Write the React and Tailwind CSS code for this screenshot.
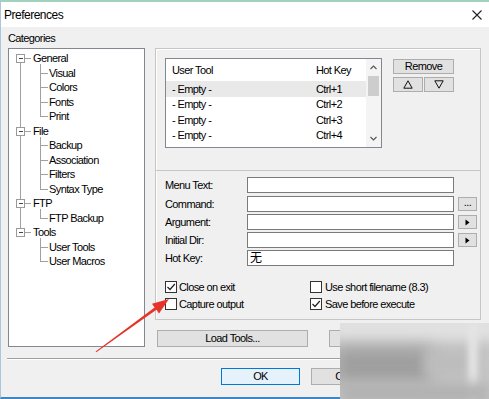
import React from "react";

const tree = [
  { t: "General", l: 0 },
  { t: "Visual", l: 1 },
  { t: "Colors", l: 1 },
  { t: "Fonts", l: 1 },
  { t: "Print", l: 1 },
  { t: "File", l: 0 },
  { t: "Backup", l: 1 },
  { t: "Association", l: 1 },
  { t: "Filters", l: 1 },
  { t: "Syntax Type", l: 1 },
  { t: "FTP", l: 0 },
  { t: "FTP Backup", l: 1 },
  { t: "Tools", l: 0 },
  { t: "User Tools", l: 1 },
  { t: "User Macros", l: 1 },
];

const yc = (i) => Math.round(9.25 + 14.5 * i) + 0.5;

function TreeLines() {
  const roots = [0, 5, 10, 12];
  const groups = [
    [0, 4],
    [5, 9],
    [10, 11],
    [12, 14],
  ];
  return (
    <svg className="absolute left-0 top-0" width="135" height="297" shapeRendering="crispEdges">
      <line x1="11.5" y1={yc(0)} x2="11.5" y2={yc(12)} stroke="#a0a0a0" />
      {groups.map(([r, last]) => (
        <g key={r}>
          <line x1="31.5" y1={yc(r) + 5} x2="31.5" y2={yc(last)} stroke="#a0a0a0" />
          {Array.from({ length: last - r }, (_, k) => r + 1 + k).map((c) => (
            <line key={c} x1="31.5" y1={yc(c)} x2="39" y2={yc(c)} stroke="#a0a0a0" />
          ))}
        </g>
      ))}
      {roots.map((r) => (
        <g key={r}>
          <line x1="16" y1={yc(r)} x2="22" y2={yc(r)} stroke="#a0a0a0" />
          <rect x="7.5" y={yc(r) - 4} width="8" height="8" fill="#fff" stroke="#9a9a9a" />
          <line x1="9.5" y1={yc(r)} x2="14" y2={yc(r)} stroke="#444" />
        </g>
      ))}
    </svg>
  );
}

function Check({ checked }) {
  return (
    <div className="w-[12px] h-[12px] border border-[#333] bg-white flex items-center justify-center">
      {checked && (
        <svg width="10" height="10" viewBox="0 0 10 10">
          <polyline points="1.5,5 4,7.5 8.8,2" fill="none" stroke="#222" strokeWidth="1.2" />
        </svg>
      )}
    </div>
  );
}

function Arrow() {
  return (
    <svg className="absolute left-0 top-0 pointer-events-none" width="489" height="399">
      <polygon
        points="96.2,352.3 156.4,309.8 159,313.4 169,299 152,303.8 154.6,307.4 95.6,351.5"
        fill="#e5352b"
      />
    </svg>
  );
}

export default function App() {
  const fields = [
    { label: "Menu Text:", v: "", b: null },
    { label: "Command:", v: "", b: "dots" },
    { label: "Argument:", v: "", b: "tri" },
    { label: "Initial Dir:", v: "", b: "tri" },
    { label: "Hot Key:", v: "无", b: null },
  ];
  return (
    <div className="relative w-[489px] h-[399px] overflow-hidden font-['Liberation_Sans','Noto_Sans_CJK_SC',sans-serif] text-[11px] tracking-[-0.6px] text-black">
      <div className="w-full h-full flex flex-col bg-[#f0f0f0] border-l border-l-[#a9c6dc] border-b-2 border-b-[#3f86c4]">
        {/* title bar */}
        <div className="h-[27px] shrink-0 border-t-2 border-t-[#a3d1bd] bg-white flex items-center pl-[3px] pr-[7px]">
          <span className="text-[12px] tracking-[-0.5px]">Preferences</span>
          <svg className="ml-auto" width="10" height="10" viewBox="0 0 10 10">
            <path d="M0.5 0.5 L9.5 9.5 M9.5 0.5 L0.5 9.5" stroke="#222" strokeWidth="1.1" />
          </svg>
        </div>

        {/* main */}
        <div className="h-[331px] shrink-0 flex pl-[7px]">
          {/* left */}
          <div className="w-[137px] flex flex-col">
            <div className="mt-[4px] h-[14px] leading-[14px]">Categories</div>
            <div className="relative mt-[3px] h-[299px] bg-white border border-[#828790] pt-[2px]">
              <TreeLines />
              <div className="relative">
                {tree.map((n) => (
                  <div
                    key={n.t}
                    className={
                      n.l === 0
                        ? "h-[14.5px] leading-[14.5px] pl-[24px] whitespace-nowrap"
                        : "h-[14.5px] leading-[14.5px] pl-[40px] whitespace-nowrap"
                    }
                  >
                    {n.t}
                  </div>
                ))}
              </div>
            </div>
          </div>

          {/* right */}
          <div className="ml-[10px] pt-[21px] flex flex-col">
            <div className="w-[326px] h-[272px] border border-[#c6c6c6] shadow-[inset_1px_1px_0_#ffffff] flex flex-col">
              {/* top section */}
              <div className="h-[122px] shrink-0 border-b border-b-[#c6c6c6] pl-[9px] pt-[9px] flex">
                <div className="w-[217px] h-[90px] border border-[#828790] bg-white flex">
                  <div className="flex-1 flex flex-col">
                    <div className="h-[22px] flex items-center">
                      <div className="w-[150px] pl-[6px]">User Tool</div>
                      <div>Hot Key</div>
                    </div>
                    {["Ctrl+1", "Ctrl+2", "Ctrl+3", "Ctrl+4"].map((k, i) => (
                      <div
                        key={k}
                        className={
                          i === 0
                            ? "h-[15.5px] flex items-center bg-[#e9e9e9]"
                            : "h-[15.5px] flex items-center"
                        }
                      >
                        <div className="w-[150px] pl-[6px]">- Empty -</div>
                        <div>{k}</div>
                      </div>
                    ))}
                  </div>
                  <div className="w-[15px] bg-[#f4f4f4] flex flex-col items-center">
                    <div className="h-[17px] flex items-center justify-center">
                      <svg width="7" height="5" viewBox="0 0 7 5">
                        <polyline points="0.5,4 3.5,1 6.5,4" fill="none" stroke="#555" strokeWidth="1.1" />
                      </svg>
                    </div>
                    <div className="w-[11px] h-[20px] bg-[#cdcdcd]" />
                    <div className="flex-1" />
                    <div className="h-[17px] flex items-center justify-center">
                      <svg width="7" height="5" viewBox="0 0 7 5">
                        <polyline points="0.5,1 3.5,4 6.5,1" fill="none" stroke="#555" strokeWidth="1.1" />
                      </svg>
                    </div>
                  </div>
                </div>
                <div className="ml-[11px] mt-[1px] flex flex-col">
                  <div className="w-[61px] h-[15px] bg-[#e1e1e1] border border-[#adadad] flex items-center justify-center">
                    Remove
                  </div>
                  <div className="mt-[3px] flex gap-[1px]">
                    <div className="w-[30px] h-[15px] bg-[#e1e1e1] border border-[#adadad] flex items-center justify-center">
                      <svg width="10" height="9" viewBox="0 0 10 9">
                        <polygon points="5,0.8 9.2,8.2 0.8,8.2" fill="none" stroke="#111" strokeWidth="1" />
                      </svg>
                    </div>
                    <div className="w-[30px] h-[15px] bg-[#e1e1e1] border border-[#adadad] flex items-center justify-center">
                      <svg width="10" height="9" viewBox="0 0 10 9">
                        <polygon points="0.8,0.8 9.2,0.8 5,8.2" fill="none" stroke="#111" strokeWidth="1" />
                      </svg>
                    </div>
                  </div>
                </div>
              </div>

              {/* lower section */}
              <div className="flex-1 pl-[9px] pt-[6px] flex flex-col">
                <div className="flex flex-col gap-[2px]">
                  {fields.map((f, i) => (
                    <div key={f.label} className={i === 0 ? "h-[16px] flex items-center mb-[1px]" : "h-[16px] flex items-center"}>
                      <div className="w-[82px]">{f.label}</div>
                      <div className="w-[207px] h-[16px] bg-white border border-[#7a7a7a] pl-[2px] leading-[14px] text-[12px]">
                        {f.v}
                      </div>
                      {f.b === "dots" && (
                        <div className="ml-[4px] w-[19px] h-[14px] bg-[#e1e1e1] border border-[#adadad] flex items-center justify-center leading-none pb-[3px]">
                          ...
                        </div>
                      )}
                      {f.b === "tri" && (
                        <div className="ml-[4px] w-[19px] h-[14px] bg-[#e1e1e1] border border-[#adadad] flex items-center justify-center">
                          <svg width="5" height="7" viewBox="0 0 5 7">
                            <polygon points="0.5,0.5 4.5,3.5 0.5,6.5" fill="#000" />
                          </svg>
                        </div>
                      )}
                    </div>
                  ))}
                </div>
                <div className="mt-[15px] flex flex-col gap-[5px]">
                  <div className="flex h-[12px] items-center">
                    <div className="w-[145px] flex items-center">
                      <Check checked />
                      <span className="ml-[2px]">Close on exit</span>
                    </div>
                    <div className="flex items-center">
                      <Check />
                      <span className="ml-[3px]">Use short filename (8.3)</span>
                    </div>
                  </div>
                  <div className="flex h-[12px] items-center">
                    <div className="w-[145px] flex items-center">
                      <Check />
                      <span className="ml-[2px]">Capture output</span>
                    </div>
                    <div className="flex items-center">
                      <Check checked />
                      <span className="ml-[3px]">Save before execute</span>
                    </div>
                  </div>
                </div>
              </div>
            </div>

            <div className="mt-[10px] ml-[2px] flex gap-[21px]">
              <div className="w-[151px] h-[17px] bg-[#e1e1e1] border border-[#adadad] flex items-center justify-center">
                Load Tools...
              </div>
              <div className="w-[151px] h-[17px] bg-[#e1e1e1] border border-[#adadad] flex items-center justify-center">
                Save Tools...
              </div>
            </div>
          </div>
        </div>

        {/* separator */}
        <div className="mx-[6px] h-[2px] border-t border-t-[#a0a0a0] border-b border-b-white" />

        {/* buttons */}
        <div className="mt-[8px] flex justify-end pr-[9px] gap-[11px]">
          <div className="w-[79px] h-[17px] bg-[#e5f1fb] border border-[#0078d7] flex items-center justify-center">
            OK
          </div>
          <div className="w-[79px] h-[17px] bg-[#e1e1e1] border border-[#adadad] flex items-center justify-center">
            Cancel
          </div>
          <div className="w-[79px] h-[17px] bg-[#e1e1e1] border border-[#adadad] flex items-center justify-center">
            Help
          </div>
        </div>
      </div>

      {/* blurred corner */}
      <div className="absolute left-[340px] top-[323px] w-[149px] h-[76px] overflow-hidden bg-[#c6c6c6]">
        <div className="absolute left-[-10px] top-[-10px] w-[170px] h-[28px] bg-[#e0e0e0] blur-[6px]" />
        <div className="absolute left-[-5px] top-[24px] w-[95px] h-[36px] bg-[#9f9f9f] blur-[8px]" />
        <div className="absolute left-[85px] top-[28px] w-[55px] h-[24px] bg-[#bcbcbc] blur-[6px]" />
        <div className="absolute left-[128px] top-[0px] w-[10px] h-[76px] bg-[#e4e4e4] blur-[3px]" />
        <div className="absolute left-[0px] top-[60px] w-[149px] h-[20px] bg-[#b2b2b2] blur-[6px]" />
      </div>

      <Arrow />
    </div>
  );
}
